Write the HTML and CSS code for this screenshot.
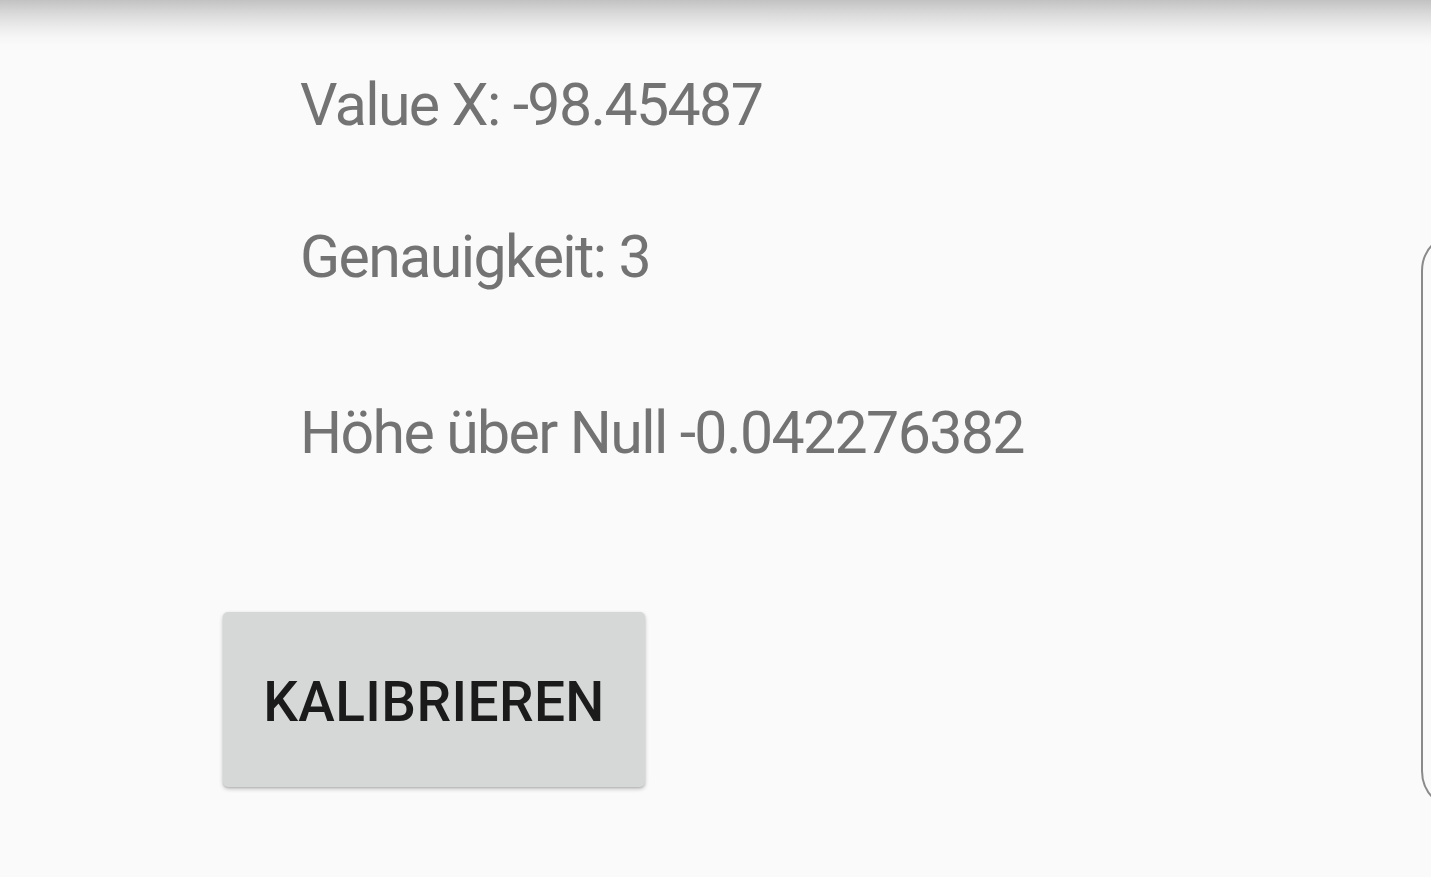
FILE: index.html
```html
<!DOCTYPE html>
<html lang="de">
<head>
<meta charset="utf-8">
<title>Kalibrieren</title>
<link rel="stylesheet" href="styles.css">
</head>
<body>
<div class="appbar-shadow"></div>
<main class="content">
  <p class="reading first">Value X: -98.45487</p>
  <p class="reading second">Genauigkeit: 3</p>
  <p class="reading third">Höhe über Null -0.042276382</p>
  <button class="btn" type="button">KALIBRIEREN</button>
</main>
<div class="edge-handle"></div>
</body>
</html>
```

FILE: styles.css
```css
html, body {
  margin: 0;
  padding: 0;
  background: #fafafa;
  width: 1431px;
  height: 877px;
  overflow: hidden;
  font-family: Roboto, "Noto Sans", sans-serif;
}

.appbar-shadow {
  position: absolute;
  top: 0;
  left: 0;
  width: 1431px;
  height: 46px;
  background: linear-gradient(to bottom, #c2c2c2 0%, #dadada 30%, #ececec 60%, #f6f6f6 82%, #fafafa 100%);
  z-index: 1;
}

.content {
  display: flex;
  flex-direction: column;
  align-items: flex-start;
  padding: 70px 0 0 223px;
}

.reading {
  margin: 0;
  padding-left: 77px;
  font-size: 59px;
  line-height: 70px;
  letter-spacing: -1.6px;
  color: #737373;
  font-weight: 400;
  white-space: nowrap;
}

.reading.second { margin-top: 82px; }
.reading.third { margin-top: 106px; }

.btn {
  margin-top: 144px;
  width: 422px;
  height: 175px;
  border: none;
  border-radius: 5px;
  background: #d6d7d7;
  color: #1b1b1b;
  font-family: Roboto, "Noto Sans", sans-serif;
  font-weight: 500;
  font-size: 55px;
  letter-spacing: 0.4px;
  padding: 4px 0 0 0;
  box-shadow: 0 2px 4px rgba(0, 0, 0, 0.22), 0 1px 2px rgba(0, 0, 0, 0.12);
}

.edge-handle {
  position: absolute;
  left: 1421px;
  top: 231px;
  width: 80px;
  height: 580px;
  border: 2px solid #8a8a8a;
  border-radius: 40px;
  box-sizing: border-box;
}
```
